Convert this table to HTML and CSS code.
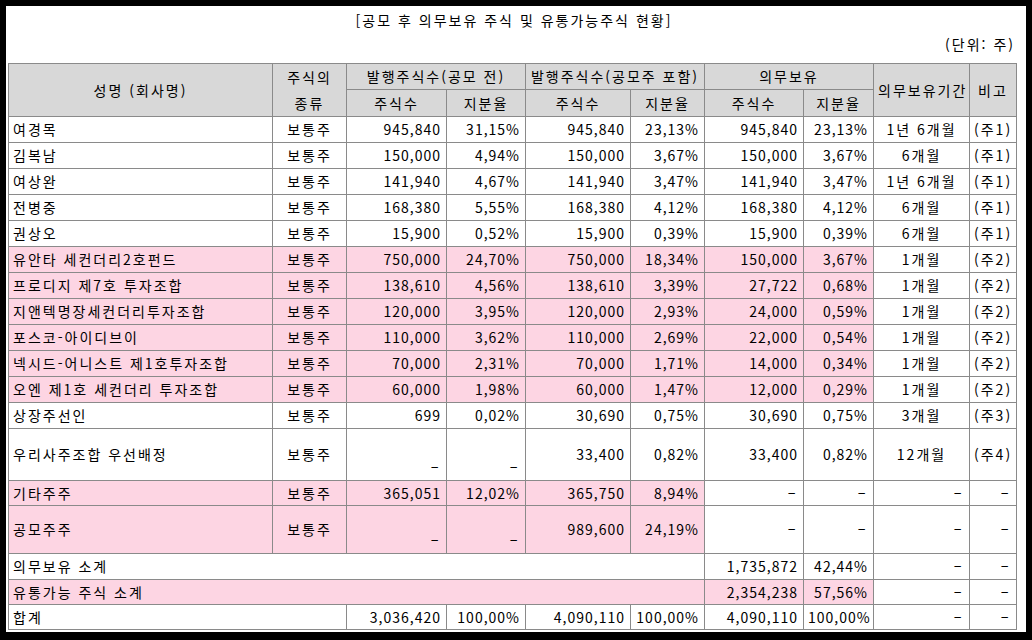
FILE: index.html
```html
<!DOCTYPE html>
<html lang="ko">
<head>
<meta charset="utf-8">
<title>공모 후 의무보유 주식 및 유통가능주식 현황</title>
<link rel="stylesheet" href="styles.css">
</head>
<body>
<div class="frame">
  <div class="title">[공모 후 의무보유 주식 및 유통가능주식 현황]</div>
  <div class="unit">(단위: 주)</div>
  <table class="grid">
    <colgroup>
      <col class="c-name"><col class="c-kind"><col class="c-n1"><col class="c-p1"><col class="c-n2"><col class="c-p2"><col class="c-n3"><col class="c-p3"><col class="c-per"><col class="c-note">
    </colgroup>
    <thead>
      <tr class="h1">
        <th rowspan="2">성명 (회사명)</th>
        <th rowspan="2" class="two">주식의<br>종류</th>
        <th colspan="2">발행주식수(공모 전)</th>
        <th colspan="2">발행주식수(공모주 포함)</th>
        <th colspan="2">의무보유</th>
        <th rowspan="2">의무보유기간</th>
        <th rowspan="2">비고</th>
      </tr>
      <tr class="h2">
        <th>주식수</th><th>지분율</th><th>주식수</th><th>지분율</th><th>주식수</th><th>지분율</th>
      </tr>
    </thead>
    <tbody>
      <tr><td class="l">여경목</td><td class="c">보통주</td><td class="r">945,840</td><td class="r">31,15%</td><td class="r">945,840</td><td class="r">23,13%</td><td class="r">945,840</td><td class="r">23,13%</td><td class="c">1년 6개월</td><td class="c">(주1)</td></tr>
      <tr><td class="l">김복남</td><td class="c">보통주</td><td class="r">150,000</td><td class="r">4,94%</td><td class="r">150,000</td><td class="r">3,67%</td><td class="r">150,000</td><td class="r">3,67%</td><td class="c">6개월</td><td class="c">(주1)</td></tr>
      <tr><td class="l">여상완</td><td class="c">보통주</td><td class="r">141,940</td><td class="r">4,67%</td><td class="r">141,940</td><td class="r">3,47%</td><td class="r">141,940</td><td class="r">3,47%</td><td class="c">1년 6개월</td><td class="c">(주1)</td></tr>
      <tr><td class="l">전병중</td><td class="c">보통주</td><td class="r">168,380</td><td class="r">5,55%</td><td class="r">168,380</td><td class="r">4,12%</td><td class="r">168,380</td><td class="r">4,12%</td><td class="c">6개월</td><td class="c">(주1)</td></tr>
      <tr><td class="l">권상오</td><td class="c">보통주</td><td class="r">15,900</td><td class="r">0,52%</td><td class="r">15,900</td><td class="r">0,39%</td><td class="r">15,900</td><td class="r">0,39%</td><td class="c">6개월</td><td class="c">(주1)</td></tr>
      <tr class="pk8"><td class="l">유안타 세컨더리2호펀드</td><td class="c">보통주</td><td class="r">750,000</td><td class="r">24,70%</td><td class="r">750,000</td><td class="r">18,34%</td><td class="r">150,000</td><td class="r">3,67%</td><td class="c">1개월</td><td class="c">(주2)</td></tr>
      <tr class="pk8"><td class="l">프로디지 제7호 투자조합</td><td class="c">보통주</td><td class="r">138,610</td><td class="r">4,56%</td><td class="r">138,610</td><td class="r">3,39%</td><td class="r">27,722</td><td class="r">0,68%</td><td class="c">1개월</td><td class="c">(주2)</td></tr>
      <tr class="pk8"><td class="l">지앤텍명장세컨더리투자조합</td><td class="c">보통주</td><td class="r">120,000</td><td class="r">3,95%</td><td class="r">120,000</td><td class="r">2,93%</td><td class="r">24,000</td><td class="r">0,59%</td><td class="c">1개월</td><td class="c">(주2)</td></tr>
      <tr class="pk8"><td class="l">포스코-아이디브이</td><td class="c">보통주</td><td class="r">110,000</td><td class="r">3,62%</td><td class="r">110,000</td><td class="r">2,69%</td><td class="r">22,000</td><td class="r">0,54%</td><td class="c">1개월</td><td class="c">(주2)</td></tr>
      <tr class="pk8"><td class="l">넥시드-어니스트 제1호투자조합</td><td class="c">보통주</td><td class="r">70,000</td><td class="r">2,31%</td><td class="r">70,000</td><td class="r">1,71%</td><td class="r">14,000</td><td class="r">0,34%</td><td class="c">1개월</td><td class="c">(주2)</td></tr>
      <tr class="pk8"><td class="l">오엔 제1호 세컨더리 투자조합</td><td class="c">보통주</td><td class="r">60,000</td><td class="r">1,98%</td><td class="r">60,000</td><td class="r">1,47%</td><td class="r">12,000</td><td class="r">0,29%</td><td class="c">1개월</td><td class="c">(주2)</td></tr>
      <tr><td class="l">상장주선인</td><td class="c">보통주</td><td class="r">699</td><td class="r">0,02%</td><td class="r">30,690</td><td class="r">0,75%</td><td class="r">30,690</td><td class="r">0,75%</td><td class="c">3개월</td><td class="c">(주3)</td></tr>
      <tr class="tall"><td class="l">우리사주조합 우선배정</td><td class="c">보통주</td><td class="r low"><span class="dash">-</span></td><td class="r low"><span class="dash">-</span></td><td class="r">33,400</td><td class="r">0,82%</td><td class="r">33,400</td><td class="r">0,82%</td><td class="c">12개월</td><td class="c">(주4)</td></tr>
      <tr class="pk6 short"><td class="l">기타주주</td><td class="c">보통주</td><td class="r">365,051</td><td class="r">12,02%</td><td class="r">365,750</td><td class="r">8,94%</td><td class="r"><span class="dash">-</span></td><td class="r"><span class="dash">-</span></td><td class="r"><span class="dash">-</span></td><td class="r"><span class="dash">-</span></td></tr>
      <tr class="pk6 mid"><td class="l">공모주주</td><td class="c">보통주</td><td class="r low"><span class="dash">-</span></td><td class="r low"><span class="dash">-</span></td><td class="r">989,600</td><td class="r">24,19%</td><td class="r"><span class="dash">-</span></td><td class="r"><span class="dash">-</span></td><td class="r"><span class="dash">-</span></td><td class="r"><span class="dash">-</span></td></tr>
      <tr><td class="l" colspan="6">의무보유 소계</td><td class="r">1,735,872</td><td class="r">42,44%</td><td class="r"><span class="dash">-</span></td><td class="r"><span class="dash">-</span></td></tr>
      <tr class="pk-sub short"><td class="l" colspan="6">유통가능 주식 소계</td><td class="r">2,354,238</td><td class="r">57,56%</td><td class="r"><span class="dash">-</span></td><td class="r"><span class="dash">-</span></td></tr>
      <tr class="short"><td class="l" colspan="2">합계</td><td class="r">3,036,420</td><td class="r">100,00%</td><td class="r">4,090,110</td><td class="r">100,00%</td><td class="r">4,090,110</td><td class="r">100,00%</td><td class="r"><span class="dash">-</span></td><td class="r"><span class="dash">-</span></td></tr>
    </tbody>
  </table>
</div>
</body>
</html>
```

FILE: styles.css
```css
html, body {
  margin: 0;
  padding: 0;
  background: #000;
}

body {
  padding: 6px;
  font-family: "Noto Sans CJK KR", "Noto Sans", sans-serif;
  font-size: 14px;
  letter-spacing: 2px;
  color: #000;
}

.frame {
  width: 1020px;
  height: 626px;
  background: #fff;
  box-sizing: border-box;
  padding-left: 2px;
}

.title {
  padding-top: 6px;
  line-height: 16px;
  text-align: center;
  padding-right: 6px;
}

.unit {
  margin-top: 8px;
  line-height: 16px;
  text-align: right;
  padding-right: 11px;
}

.grid {
  margin-top: 11px;
  width: 1009px;
  table-layout: fixed;
  border-collapse: collapse;
  border: 1px solid #000;
}

.c-name { width: 264px; }
.c-kind { width: 74px; }
.c-n1 { width: 100px; }
.c-p1 { width: 79px; }
.c-n2 { width: 105px; }
.c-p2 { width: 74px; }
.c-n3 { width: 99px; }
.c-p3 { width: 70px; }
.c-per { width: 96px; }
.c-note { width: 47px; }

.grid th,
.grid td {
  border: 1px solid #8a8a8a;
  padding: 0 4px;
  line-height: 25px;
  height: 25px;
  white-space: nowrap;
  overflow: hidden;
  font-weight: normal;
}

.grid th {
  background: #d8d8d8;
  text-align: center;
}

.grid .h2 th {
  height: 26px;
  line-height: 26px;
}

.grid th.two {
  line-height: 26px;
}

.l { text-align: left; }
.c { text-align: center; }
.grid td.r {
  text-align: right;
  letter-spacing: 1px;
  padding-right: 5px;
}

.dash {
  display: inline-block;
  transform: scaleX(1.8);
  transform-origin: right center;
}

.tall td { height: 51px; }
.mid td { height: 47px; }
.grid .short td {
  height: 24px;
  line-height: 24px;
}

.grid td.low {
  vertical-align: bottom;
  line-height: 26px;
}

.pk8 td:nth-child(-n+8),
.pk6 td:nth-child(-n+6),
.pk-sub td:nth-child(-n+3) {
  background: #fdd5e3;
}
```
